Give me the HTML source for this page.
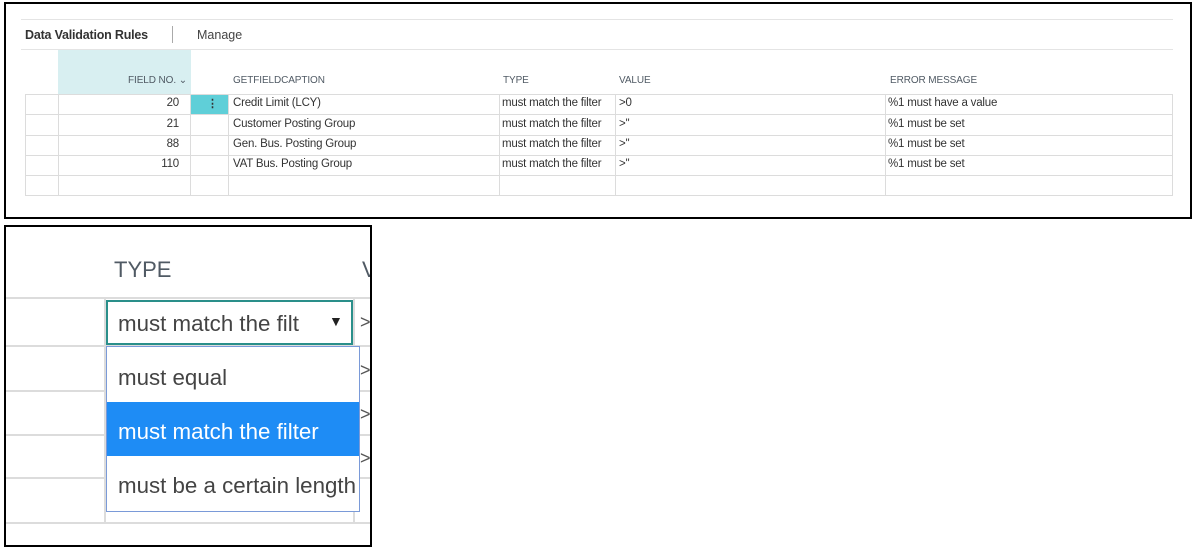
<!DOCTYPE html>
<html><head><style>
*{margin:0;padding:0;box-sizing:border-box}
body{width:1193px;height:548px;background:#fff;position:relative;font-family:"Liberation Sans",sans-serif;overflow:hidden}
.a{position:absolute;white-space:nowrap}
.t{font-size:11.5px;color:#333;letter-spacing:-0.2px}
.h{font-size:10px;color:#505a64;letter-spacing:-0.1px}
.hl{position:absolute;height:1px;background:#dcdcdc}
.vl{position:absolute;width:1px;background:#dcdcdc}
.big{font-size:22.3px;color:#444}
#clip{position:absolute;left:6px;top:227px;width:364px;height:318px;overflow:hidden}
#clip>*{margin-left:-6px;margin-top:-227px}
</style></head><body>
<div class="a" style="left:4px;top:2px;width:1188px;height:217px;border:2px solid #000"></div>
<div class="hl" style="left:21px;top:19px;width:1152px;background:#e4e4e4"></div>
<div class="a" style="left:25px;top:28px;font-size:12.5px;font-weight:bold;color:#333;letter-spacing:-0.2px">Data Validation Rules</div>
<div class="vl" style="left:172px;top:26px;height:17px;background:#aaa"></div>
<div class="a" style="left:197px;top:28px;font-size:12.5px;color:#444">Manage</div>
<div class="hl" style="left:21px;top:49px;width:1152px;background:#e4e4e4"></div>
<div class="a" style="left:58px;top:50px;width:133px;height:44px;background:#d8eff1"></div>
<div class="a h" style="left:58px;top:75px;width:129px;text-align:right">FIELD NO. ⌄</div>
<div class="a h" style="left:233px;top:75px">GETFIELDCAPTION</div>
<div class="a h" style="left:503px;top:75px">TYPE</div>
<div class="a h" style="left:619px;top:75px">VALUE</div>
<div class="a h" style="left:890px;top:75px">ERROR MESSAGE</div>
<div class="hl" style="left:25px;top:94px;width:1148px"></div>
<div class="hl" style="left:25px;top:114px;width:1148px"></div>
<div class="hl" style="left:25px;top:135px;width:1148px"></div>
<div class="hl" style="left:25px;top:155px;width:1148px"></div>
<div class="hl" style="left:25px;top:175px;width:1148px"></div>
<div class="hl" style="left:25px;top:195px;width:1148px"></div>
<div class="vl" style="left:25px;top:94px;height:102px"></div>
<div class="vl" style="left:58px;top:94px;height:102px"></div>
<div class="vl" style="left:190px;top:94px;height:102px"></div>
<div class="vl" style="left:228px;top:94px;height:102px"></div>
<div class="vl" style="left:499px;top:94px;height:102px"></div>
<div class="vl" style="left:615px;top:94px;height:102px"></div>
<div class="vl" style="left:885px;top:94px;height:102px"></div>
<div class="vl" style="left:1172px;top:94px;height:102px"></div>
<div class="a" style="left:191px;top:95px;width:37px;height:19px;background:#5fcfd8"></div>
<div class="a" style="left:207px;top:97px;font-size:11px;color:#333;font-weight:bold">⋮</div>
<div class="a t" style="left:58px;top:97px;width:121px;text-align:right">20</div>
<div class="a t" style="left:58px;top:118px;width:121px;text-align:right">21</div>
<div class="a t" style="left:58px;top:138px;width:121px;text-align:right">88</div>
<div class="a t" style="left:58px;top:158px;width:121px;text-align:right">110</div>
<div class="a t" style="left:233px;top:97px">Credit Limit (LCY)</div>
<div class="a t" style="left:233px;top:118px">Customer Posting Group</div>
<div class="a t" style="left:233px;top:138px">Gen. Bus. Posting Group</div>
<div class="a t" style="left:233px;top:158px">VAT Bus. Posting Group</div>
<div class="a t" style="left:502px;top:97px">must match the filter</div>
<div class="a t" style="left:502px;top:118px">must match the filter</div>
<div class="a t" style="left:502px;top:138px">must match the filter</div>
<div class="a t" style="left:502px;top:158px">must match the filter</div>
<div class="a t" style="left:619px;top:97px">&gt;0</div>
<div class="a t" style="left:619px;top:118px">&gt;''</div>
<div class="a t" style="left:619px;top:138px">&gt;''</div>
<div class="a t" style="left:619px;top:158px">&gt;''</div>
<div class="a t" style="left:888px;top:97px">%1 must have a value</div>
<div class="a t" style="left:888px;top:118px">%1 must be set</div>
<div class="a t" style="left:888px;top:138px">%1 must be set</div>
<div class="a t" style="left:888px;top:158px">%1 must be set</div>

<div class="a" style="left:4px;top:225px;width:368px;height:322px;border:2px solid #000"></div>
<div id="clip"><div style="position:relative;width:1193px;height:548px">
<div class="a" style="left:114px;top:257px;font-size:22px;color:#505a64">TYPE</div>
<div class="a" style="left:362px;top:257px;font-size:22px;color:#505a64">V</div>
<div class="hl" style="left:6px;top:297px;width:364px;height:2px"></div>
<div class="hl" style="left:6px;top:345px;width:364px;height:2px"></div>
<div class="hl" style="left:6px;top:390px;width:364px;height:2px"></div>
<div class="hl" style="left:6px;top:434px;width:364px;height:2px"></div>
<div class="hl" style="left:6px;top:477px;width:364px;height:2px"></div>
<div class="hl" style="left:6px;top:522px;width:364px;height:2px"></div>
<div class="vl" style="left:104px;top:299px;height:224px;width:2px"></div>
<div class="vl" style="left:353px;top:299px;height:224px;width:2px"></div>
<div class="a" style="left:106px;top:300px;width:247px;height:45px;border:2px solid #2a8f8a;background:#fff"></div>
<div class="a big" style="left:118px;top:311px">must match the filt</div>
<div class="a" style="left:329px;top:313px;font-size:14px;color:#222">▼</div>
<div class="a" style="left:360px;top:312px;font-size:18px;color:#555">&gt;</div>
<div class="a" style="left:360px;top:360px;font-size:18px;color:#555">&gt;</div>
<div class="a" style="left:360px;top:404px;font-size:18px;color:#555">&gt;</div>
<div class="a" style="left:360px;top:448px;font-size:18px;color:#555">&gt;</div>
<div class="a" style="left:106px;top:346px;width:254px;height:166px;border:1px solid #7a9ad8;background:#fff"></div>
<div class="a big" style="left:118px;top:365px">must equal</div>
<div class="a" style="left:107px;top:402px;width:252px;height:54px;background:#1e8cf5"></div>
<div class="a big" style="left:118px;top:419px;color:#fff">must match the filter</div>
<div class="a big" style="left:118px;top:473px">must be a certain length</div>
</div></div>
</body></html>
